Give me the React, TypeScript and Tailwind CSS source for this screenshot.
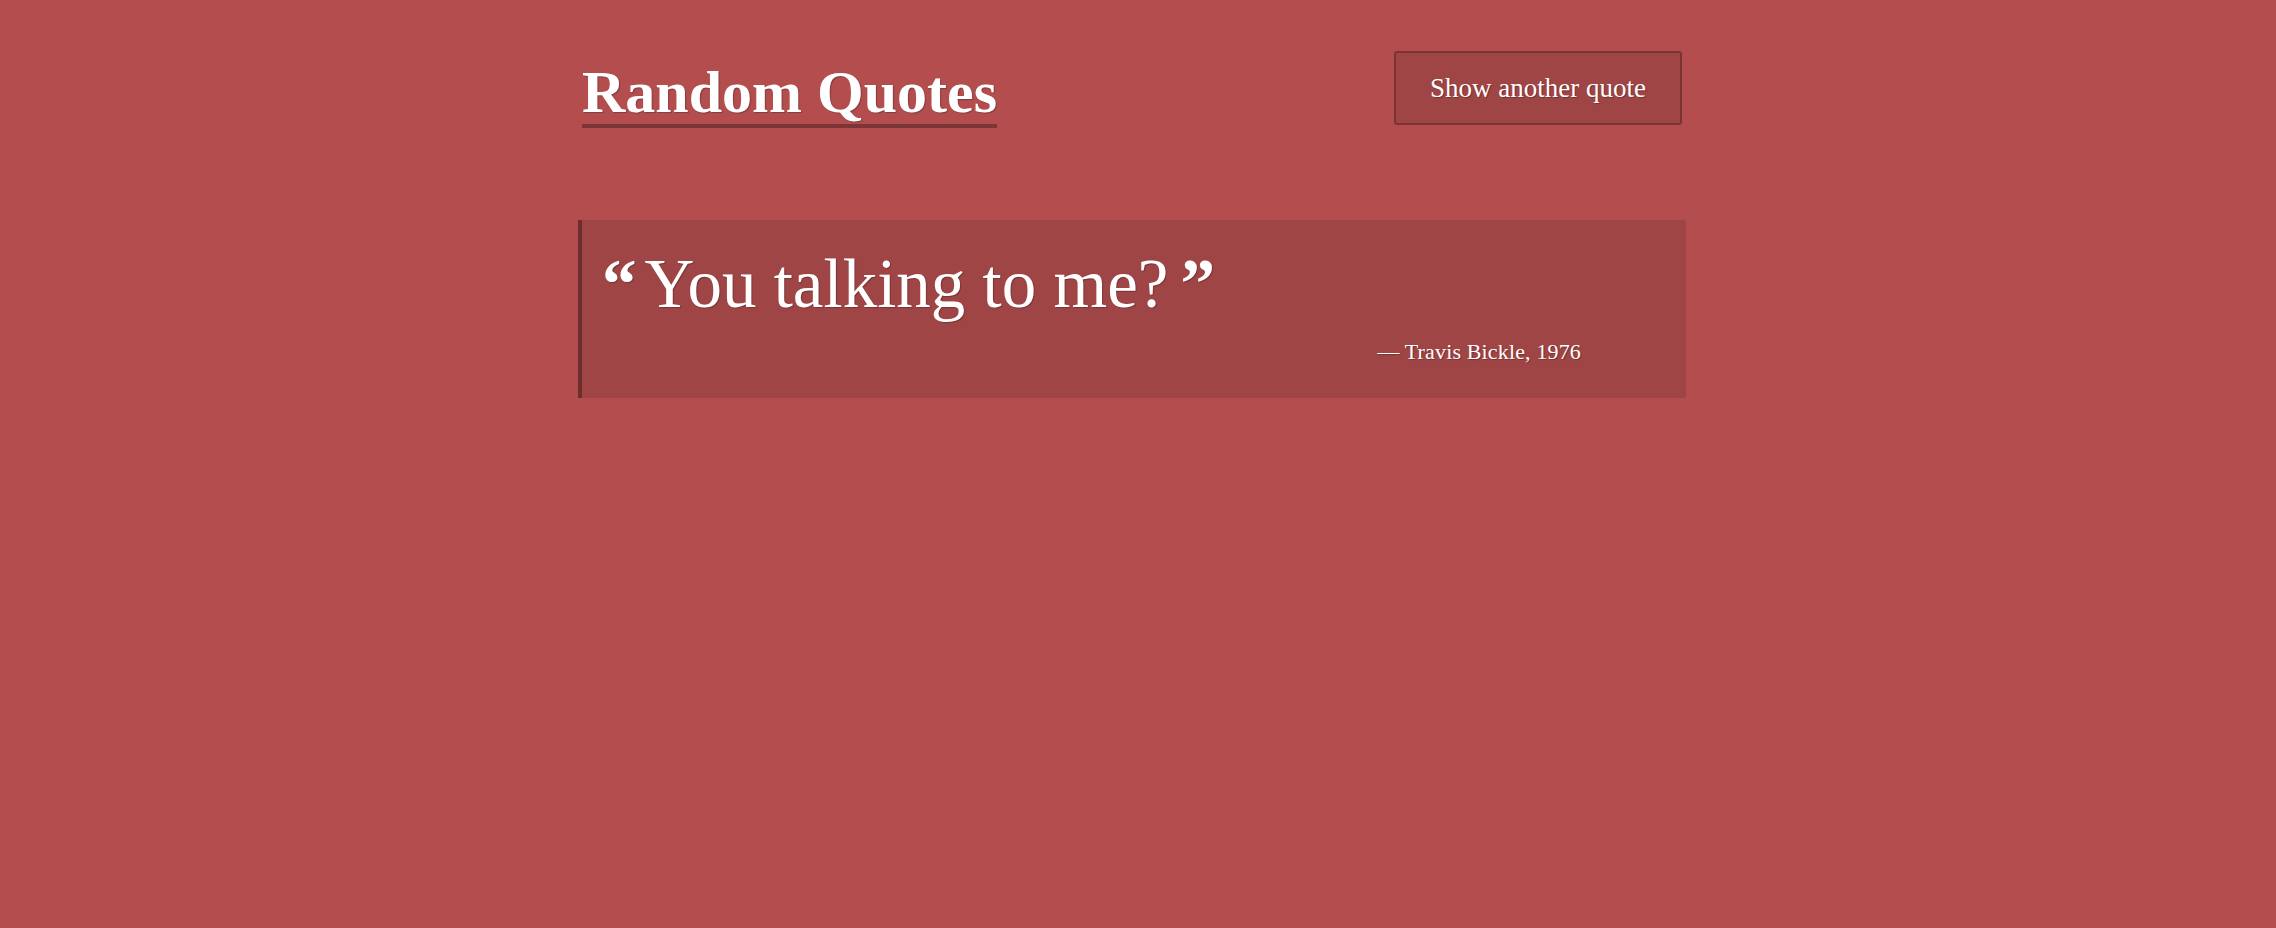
import React from "react";

export default function App() {
  const serif = { fontFamily: '"Liberation Serif", "DejaVu Serif", serif' };
  return (
    <div className="min-h-[928px] w-full bg-[#b34d4e] text-white" style={serif}>
      <div className="ml-[578px] w-[1108px] pt-[51px]">
        <header className="flex items-start justify-between px-[4px]">
          <h1 className="mt-[10px] border-b-[4px] border-[#7c3535] text-[60px] font-bold leading-[63px] [text-shadow:1px_1px_1px_rgba(0,0,0,0.25)]">
            Random Quotes
          </h1>
          <button className="flex h-[74px] w-[288px] items-center justify-center rounded-[3px] border-2 border-[#7a3434] bg-[#a04545] text-[27px] [text-shadow:1px_1px_1px_rgba(0,0,0,0.3)]">
            Show another quote
          </button>
        </header>
        <blockquote className="mt-[92px] flex h-[178px] flex-col rounded-r-[3px] border-l-[4px] border-[#6f2e2e] bg-[#a04545] pl-[20px] pr-[105px] pt-[30px]">
          <p className="text-[69px] leading-[69px] [text-shadow:1px_1px_1px_rgba(0,0,0,0.25)]">
            <span className="mr-[8px] font-bold">“</span>
            You talking to me?
            <span className="ml-[12px] font-bold">”</span>
          </p>
          <p className="mt-[22px] self-end text-[22px] leading-[22px] tracking-[0.15px] [text-shadow:1px_1px_1px_rgba(0,0,0,0.3)]">
            — Travis Bickle, 1976
          </p>
        </blockquote>
      </div>
    </div>
  );
}
